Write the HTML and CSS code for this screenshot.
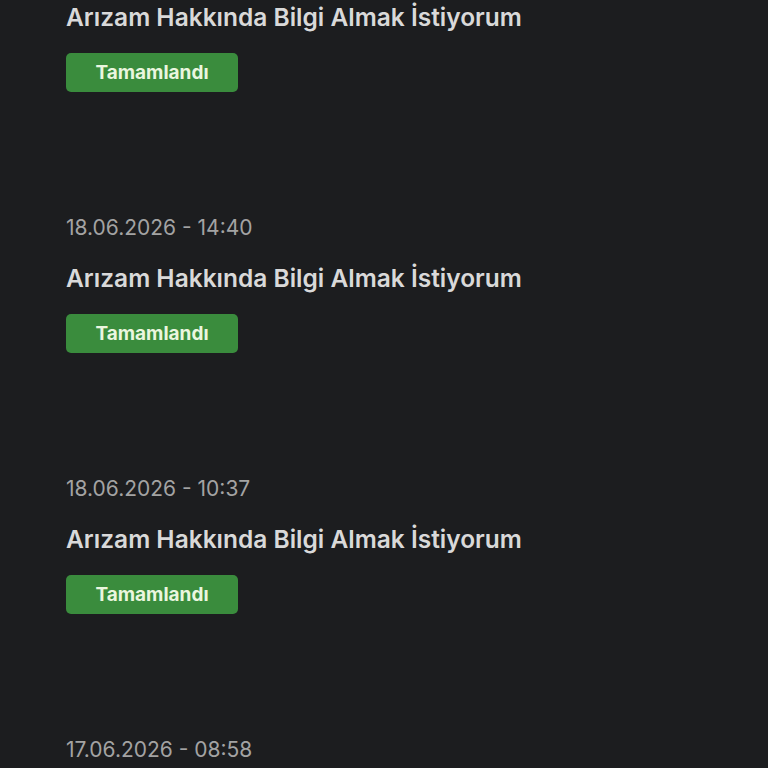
FILE: index.html
```html
<!DOCTYPE html>
<html lang="tr">
<head>
    <meta charset="UTF-8">
    <meta name="viewport" content="width=device-width, initial-scale=1.0">
    <title>Başvurularım</title>
    <link rel="stylesheet" href="styles.css">
</head>
<body>
    <div class="request-list">
        <div class="request">
            <h3 class="request-title">Arızam Hakkında Bilgi Almak İstiyorum</h3>
            <span class="status">Tamamlandı</span>
        </div>
        <div class="request">
            <p class="request-date">18.06.2026 - 14:40</p>
            <h3 class="request-title">Arızam Hakkında Bilgi Almak İstiyorum</h3>
            <span class="status">Tamamlandı</span>
        </div>
        <div class="request">
            <p class="request-date">18.06.2026 - 10:37</p>
            <h3 class="request-title">Arızam Hakkında Bilgi Almak İstiyorum</h3>
            <span class="status">Tamamlandı</span>
        </div>
        <div class="request">
            <p class="request-date">17.06.2026 - 08:58</p>
        </div>
    </div>
</body>
</html>
```

FILE: styles.css
```css
html, body {
    margin: 0;
    height: 100%;
    overflow: hidden;
    background: #1c1d1f;
}
body {
    font-family: Inter, "Noto Sans", sans-serif;
}
.request-list {
    display: flex;
    flex-direction: column;
    gap: 122px;
    padding-left: 66px;
    padding-top: 2px;
}
.request {
    display: flex;
    flex-direction: column;
    align-items: flex-start;
}
.request-date {
    margin: 0 0 21px;
    font-size: 21px;
    line-height: 28px;
    color: #a3a3a3;
}
.request-title {
    margin: 0;
    font-size: 24.5px;
    line-height: 30px;
    font-weight: 600;
    color: #d9d9d9;
}
.status {
    margin-top: 21px;
    width: 172px;
    height: 39px;
    display: flex;
    align-items: center;
    justify-content: center;
    background: #3a8c3d;
    border-radius: 5px;
    color: #eaf6df;
    font-size: 19px;
    font-weight: 700;
}
```
